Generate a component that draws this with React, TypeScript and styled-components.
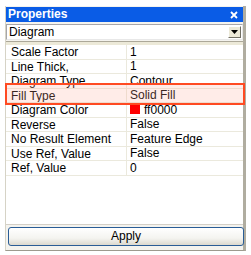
import React from "react";
import styled, { createGlobalStyle } from "styled-components";

const Global = createGlobalStyle`
  html, body { margin: 0; padding: 0; background: #ffffff; }
  body { font-family: "Liberation Sans", Arial, sans-serif; font-size: 12px; color: #000; }
`;

const Panel = styled.div`
  position: relative;
  margin: 6px 0 0 5px;
  width: 241px;
  height: 245px;
  box-sizing: border-box;
  border-left: 1px solid #d6d3c6;
  border-right: 3px solid #b0ada0;
  border-bottom: 1px solid #9d9a8e;
  background: #f4f3ee;
  display: flex;
  flex-direction: column;
`;

const TitleBar = styled.div`
  height: 15px;
  margin-top: 1px;
  background: #0a5ce6;
  color: #fff;
  font-weight: bold;
  font-size: 12px;
  line-height: 15px;
  padding: 0 0 0 2px;
  display: flex;
  align-items: center;
  justify-content: space-between;
`;

const CloseIcon = styled.svg`
  width: 8px;
  height: 8px;
  margin-right: 5px;
`;

const Combo = styled.div`
  margin-top: 2px;
  height: 16px;
  box-sizing: border-box;
  border: 1px solid #a7a6aa;
  border-right-color: #e8e8e8;
  border-bottom-color: #e8e8e8;
  background: #fff;
  display: flex;
  align-items: center;
  padding: 0 1px 0 2px;
`;

const ComboText = styled.span`
  flex: 1;
  font-size: 12px;
  line-height: 14px;
`;

const DropButton = styled.div`
  width: 13px;
  height: 12px;
  box-sizing: border-box;
  background: #ece9d8;
  border: 1px solid;
  border-color: #fff #716f64 #716f64 #fff;
  display: flex;
  align-items: center;
  justify-content: center;
`;

const Grid = styled.div`
  margin-top: 1px;
  height: 184px;
  box-sizing: border-box;
  border-top: 1px solid #aca899;
  border-bottom: 1px solid #d4d0c8;
  padding-top: 3px;
  background: linear-gradient(#ece9d8, #ece9d8) top / 100% 3px no-repeat, #fff;
  position: relative;
`;

const Row = styled.div`
  height: 14.5px;
  display: grid;
  grid-template-columns: 121px 1fr;
  box-sizing: border-box;
  border-bottom: 1px solid #ebe9dd;
  background: #fff;
`;

const NameCell = styled.div`
  padding-left: 5px;
  border-right: 1px solid #ebe9dd;
  line-height: 14px;
  white-space: nowrap;
  overflow: hidden;
`;

const ValueCell = styled.div`
  padding-left: 3px;
  line-height: 14px;
  white-space: nowrap;
  overflow: hidden;
  display: flex;
  align-items: center;
  gap: 4px;
`;

const Swatch = styled.span<{ $color: string }>`
  display: inline-block;
  width: 10px;
  height: 9px;
  background: ${(p) => p.$color};
`;

const Highlight = styled.div`
  position: absolute;
  left: -1px;
  right: -2px;
  top: 41px;
  height: 22px;
  box-sizing: border-box;
  border: 2px solid #ff4a22;
  background: rgba(255, 170, 150, 0.22);
  pointer-events: none;
`;

const ButtonArea = styled.div`
  flex: 1;
  padding: 2px 0 0 2px;
`;

const ApplyButton = styled.button`
  width: 236px;
  height: 19px;
  box-sizing: border-box;
  border: 1px solid #2a5d96;
  border-radius: 3px;
  background: linear-gradient(#ffffff, #f4f4f0 60%, #dcd9cf);
  font-family: "Liberation Sans", Arial, sans-serif;
  font-size: 12px;
  color: #000;
  padding: 0;
  line-height: 17px;
`;

const rows: { name: string; value: string; color?: string }[] = [
  { name: "Scale Factor", value: "1" },
  { name: "Line Thick,", value: "1" },
  { name: "Diagram Type", value: "Contour" },
  { name: "Fill Type", value: "Solid Fill" },
  { name: "Diagram Color", value: "ff0000", color: "#ff0000" },
  { name: "Reverse", value: "False" },
  { name: "No Result Element", value: "Feature Edge" },
  { name: "Use Ref, Value", value: "False" },
  { name: "Ref, Value", value: "0" },
];

export default function App() {
  return (
    <>
      <Global />
      <Panel>
        <TitleBar>
          <span>Properties</span>
          <CloseIcon viewBox="0 0 8 8">
            <path d="M1 1 L7 7 M7 1 L1 7" stroke="#fff" strokeWidth="1.8" />
          </CloseIcon>
        </TitleBar>
        <Combo>
          <ComboText>Diagram</ComboText>
          <DropButton>
            <svg width="7" height="4" viewBox="0 0 7 4">
              <path d="M0 0 H7 L3.5 4 Z" fill="#000" />
            </svg>
          </DropButton>
        </Combo>
        <Grid>
          {rows.map((r) => (
            <Row key={r.name}>
              <NameCell>{r.name}</NameCell>
              <ValueCell>
                {r.color && <Swatch $color={r.color} />}
                {r.value}
              </ValueCell>
            </Row>
          ))}
          <Highlight />
        </Grid>
        <ButtonArea>
          <ApplyButton>Apply</ApplyButton>
        </ButtonArea>
      </Panel>
    </>
  );
}
